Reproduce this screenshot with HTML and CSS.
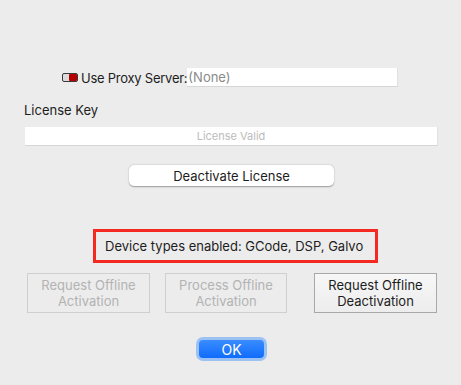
FILE: index.html
```html
<!DOCTYPE html>
<html lang="en">
<head>
  <meta charset="UTF-8">
  <meta name="viewport" content="width=device-width, initial-scale=1.0">
  <title>License</title>
  <link rel="stylesheet" href="styles.css">
</head>
<body>
  <div class="dialog">

    <!-- Proxy -->
    <div class="proxy-row">
      <span class="toggle"><span class="knob"></span></span>
      <span class="proxy-label">Use Proxy Server:</span>
      <div class="field proxy-field">(None)</div>
    </div>

    <!-- License key -->
    <div class="section-label">License Key</div>
    <div class="field license-field">License Valid</div>

    <div class="deactivate-row">
      <button class="btn deactivate">Deactivate License</button>
    </div>

    <div class="devices">Device types enabled: GCode, DSP, Galvo</div>

    <!-- Offline actions -->
    <div class="offline-row">
      <button class="btn-square disabled">Request Offline<br>Activation</button>
      <button class="btn-square disabled second">Process Offline<br>Activation</button>
      <button class="btn-square third">Request Offline<br>Deactivation</button>
    </div>

    <div class="ok-row">
      <button class="btn-ok">OK</button>
    </div>
  </div>
</body>
</html>
```

FILE: styles.css
```css
* {
  margin: 0;
  padding: 0;
  box-sizing: border-box;
}

body {
  font-family: Inter, "Liberation Sans", sans-serif;
  font-size: 13px;
  color: #1d1d1d;
  background: #ececec;
  width: 461px;
  height: 385px;
  overflow: hidden;
}

.dialog {
  padding-top: 68px;
}

.proxy-row {
  display: flex;
  align-items: center;
  height: 19px;
  margin-left: 62px;
}

.toggle {
  display: flex;
  justify-content: flex-end;
  width: 16px;
  height: 9px;
  border: 1px solid #3a3a3a;
  border-radius: 2px;
  background: #dcdcdc;
  margin-right: 3px;
}

.toggle .knob {
  width: 8px;
  height: 100%;
  background: #b40000;
  border-radius: 1px;
}

.proxy-label {
  letter-spacing: -0.25px;
}

.field {
  background: #fff;
  height: 19px;
  line-height: 19px;
  border-bottom: 1px solid #d6d6d6;
  border-right: 1px solid #e2e2e2;
}

.proxy-field {
  width: 211px;
  color: #8a8a8a;
  padding-left: 1px;
}

.section-label {
  margin: 15px 0 0 24px;
  line-height: 16px;
}

.license-field {
  margin: 9px 0 0 25px;
  width: 413px;
  text-align: center;
  font-size: 11px;
  color: #bcbcbc;
}

.deactivate-row {
  margin: 19px 0 0 129px;
}

.btn {
  font-family: inherit;
  font-size: 13px;
  color: #1d1d1d;
  background: #fff;
  border: none;
  border-radius: 5px;
  box-shadow: 0 0.5px 1.5px rgba(0, 0, 0, 0.35);
}

.deactivate {
  width: 205px;
  height: 21px;
}

.devices {
  margin: 43px 0 0 93px;
  width: 285px;
  height: 34px;
  border: 3px solid #f42a22;
  padding-left: 9px;
  line-height: 28px;
  color: #1d1d1d;
}

.offline-row {
  display: flex;
  margin: 10px 0 0 27px;
}

.btn-square {
  font-family: inherit;
  font-size: 13px;
  line-height: 16px;
  width: 123px;
  height: 40px;
  color: #1d1d1d;
  background: linear-gradient(#f7f7f7, #ededed);
  border: 1px solid #a8a8a8;
}

.btn-square.disabled {
  color: #b3b3b3;
  background: #ececec;
  border-color: #cfcfcf;
}

.second {
  margin-left: 15px;
  width: 122px;
}

.third {
  margin-left: 27px;
}

.ok-row {
  margin: 24px 0 0 196px;
}

.btn-ok {
  font-family: inherit;
  font-size: 14px;
  color: #fff;
  width: 71px;
  height: 24px;
  border: 3px solid #9cc2f4;
  border-radius: 7px;
  background: linear-gradient(#3a8cff, #0f6cfb);
}
```
